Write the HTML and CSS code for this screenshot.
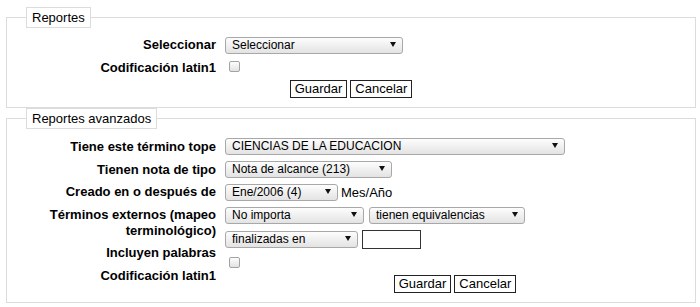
FILE: index.html
```html
<!DOCTYPE html>
<html lang="es">
<head>
  <meta charset="UTF-8" />
  <title>Reportes</title>
  <link rel="stylesheet" href="styles.css">
</head>
<body>

<div class="page">

  <!-- Reportes -->
  <fieldset class="box box-basic">
    <legend>Reportes</legend>
    <div class="form">
      <div class="labels labels-basic">
        <label>Seleccionar</label>
        <label>Codificación latin1</label>
      </div>
      <div class="controls">
        <span class="sel sel-report">
          <select><option>Seleccionar</option></select>
        </span>
        <div class="check-row check-row-basic"><input type="checkbox" class="check"></div>
      </div>
    </div>
    <div class="actions actions-basic">
      <button>Guardar</button>
      <button>Cancelar</button>
    </div>
  </fieldset>

  <!-- Reportes avanzados -->
  <fieldset class="box">
    <legend>Reportes avanzados</legend>
    <div class="form">
      <div class="labels labels-adv">
        <label>Tiene este término tope</label>
        <label>Tienen nota de tipo</label>
        <label>Creado en o después de</label>
        <label>Términos externos (mapeo terminológico)</label>
        <label>Incluyen palabras</label>
        <label>Codificación latin1</label>
      </div>
      <div class="controls">
        <span class="sel sel-tope">
          <select><option>CIENCIAS DE LA EDUCACION</option></select>
        </span>
        <span class="sel sel-nota">
          <select><option>Nota de alcance (213)</option></select>
        </span>
        <div class="row row-date">
          <span class="sel sel-fecha">
            <select><option>Ene/2006 (4)</option></select>
          </span>
          <span class="hint">Mes/Año</span>
        </div>
        <div class="row row-map">
          <span class="sel sel-importa">
            <select><option>No importa</option></select>
          </span>
          <span class="sel sel-equiv">
            <select><option>tienen equivalencias</option></select>
          </span>
        </div>
        <div class="row">
          <span class="sel sel-final">
            <select><option>finalizadas en</option></select>
          </span>
          <input type="text" class="text-in">
        </div>
        <div class="check-row check-row-adv"><input type="checkbox" class="check"></div>
        <div class="actions">
          <button>Guardar</button>
          <button>Cancelar</button>
        </div>
      </div>
    </div>
  </fieldset>

</div>

</body>
</html>
```

FILE: styles.css
```css
/* base */
body {
  margin: 0;
  font-family: "Liberation Sans", Arial, sans-serif;
  font-size: 13px;
  color: #000;
  background: #fff;
}

.page {
  padding: 7px 4px 0 6px;
}

/* fieldsets */
.box {
  margin: 0;
  border: 1px solid #dcdcdc;
  padding: 9px 10px 9px;
  min-width: 0;
}

.box legend {
  margin-left: 9px;
  padding: 0 5px;
  border: 1px solid #dcdcdc;
  line-height: 19px;
  background: #fff;
}

.box-basic {
  padding-bottom: 9px;
}

/* two column form */
.form {
  display: flex;
  gap: 9px;
}

.labels {
  width: 199px;
  flex: none;
  display: flex;
  flex-direction: column;
  text-align: right;
  font-weight: bold;
  line-height: 16px;
}

.labels-basic {
  gap: 7px;
}

.labels-adv {
  gap: 6.5px;
  padding-top: 1px;
}

.controls {
  flex: 1;
  display: flex;
  flex-direction: column;
  align-items: flex-start;
  gap: 6px;
}

.row {
  display: flex;
  align-items: center;
  gap: 4px;
}

.row-date {
  gap: 3px;
}

.row-map {
  gap: 5px;
}

.hint {
  line-height: 17px;
}

/* fake selects */
.sel {
  position: relative;
  display: block;
  height: 17px;
}

.sel select {
  appearance: none;
  -webkit-appearance: none;
  box-sizing: border-box;
  width: 100%;
  height: 17px;
  margin: 0;
  padding: 0 18px 0 6px;
  border: 1px solid #a8a8a8;
  border-radius: 3px;
  background: linear-gradient(#fdfdfd, #e3e3e3);
  font-family: "Liberation Sans", Arial, sans-serif;
  font-size: 12px;
  line-height: 15px;
  color: #000;
  outline: none;
}

.sel::after {
  content: "";
  position: absolute;
  right: 7px;
  top: 5px;
  border-left: 3px solid transparent;
  border-right: 3px solid transparent;
  border-top: 5px solid #111;
  pointer-events: none;
}

.sel-report   { width: 178px; }
.sel-tope     { width: 340px; }
.sel-nota     { width: 167px; }
.sel-fecha    { width: 113px; }
.sel-importa  { width: 139px; }
.sel-equiv    { width: 156px; }
.sel-final    { width: 133px; }

.text-in {
  box-sizing: border-box;
  width: 59px;
  height: 19px;
  margin: 0;
  padding: 0 3px;
  border: 1px solid #333;
  background: #fff;
  outline: none;
}

/* checkboxes */
.check-row {
  display: flex;
}

.check {
  appearance: none;
  -webkit-appearance: none;
  width: 11px;
  height: 11px;
  margin: 1px 0 1px 4px;
  border: 1px solid #a3a3a3;
  border-radius: 2px;
  background: linear-gradient(#fdfdfd, #e2e2e2);
}

.check-row-adv .check {
  margin-top: 2px;
}

/* buttons */
.actions {
  align-self: stretch;
  display: flex;
  justify-content: center;
  gap: 3px;
}

.actions-basic {
  margin-top: 4px;
}

button {
  box-sizing: border-box;
  height: 18px;
  margin: 0;
  padding: 0 4px;
  border: 1px solid #222;
  border-radius: 0;
  background: #fff;
  font-family: "Liberation Sans", Arial, sans-serif;
  font-size: 13px;
  line-height: 16px;
  color: #000;
}
```
